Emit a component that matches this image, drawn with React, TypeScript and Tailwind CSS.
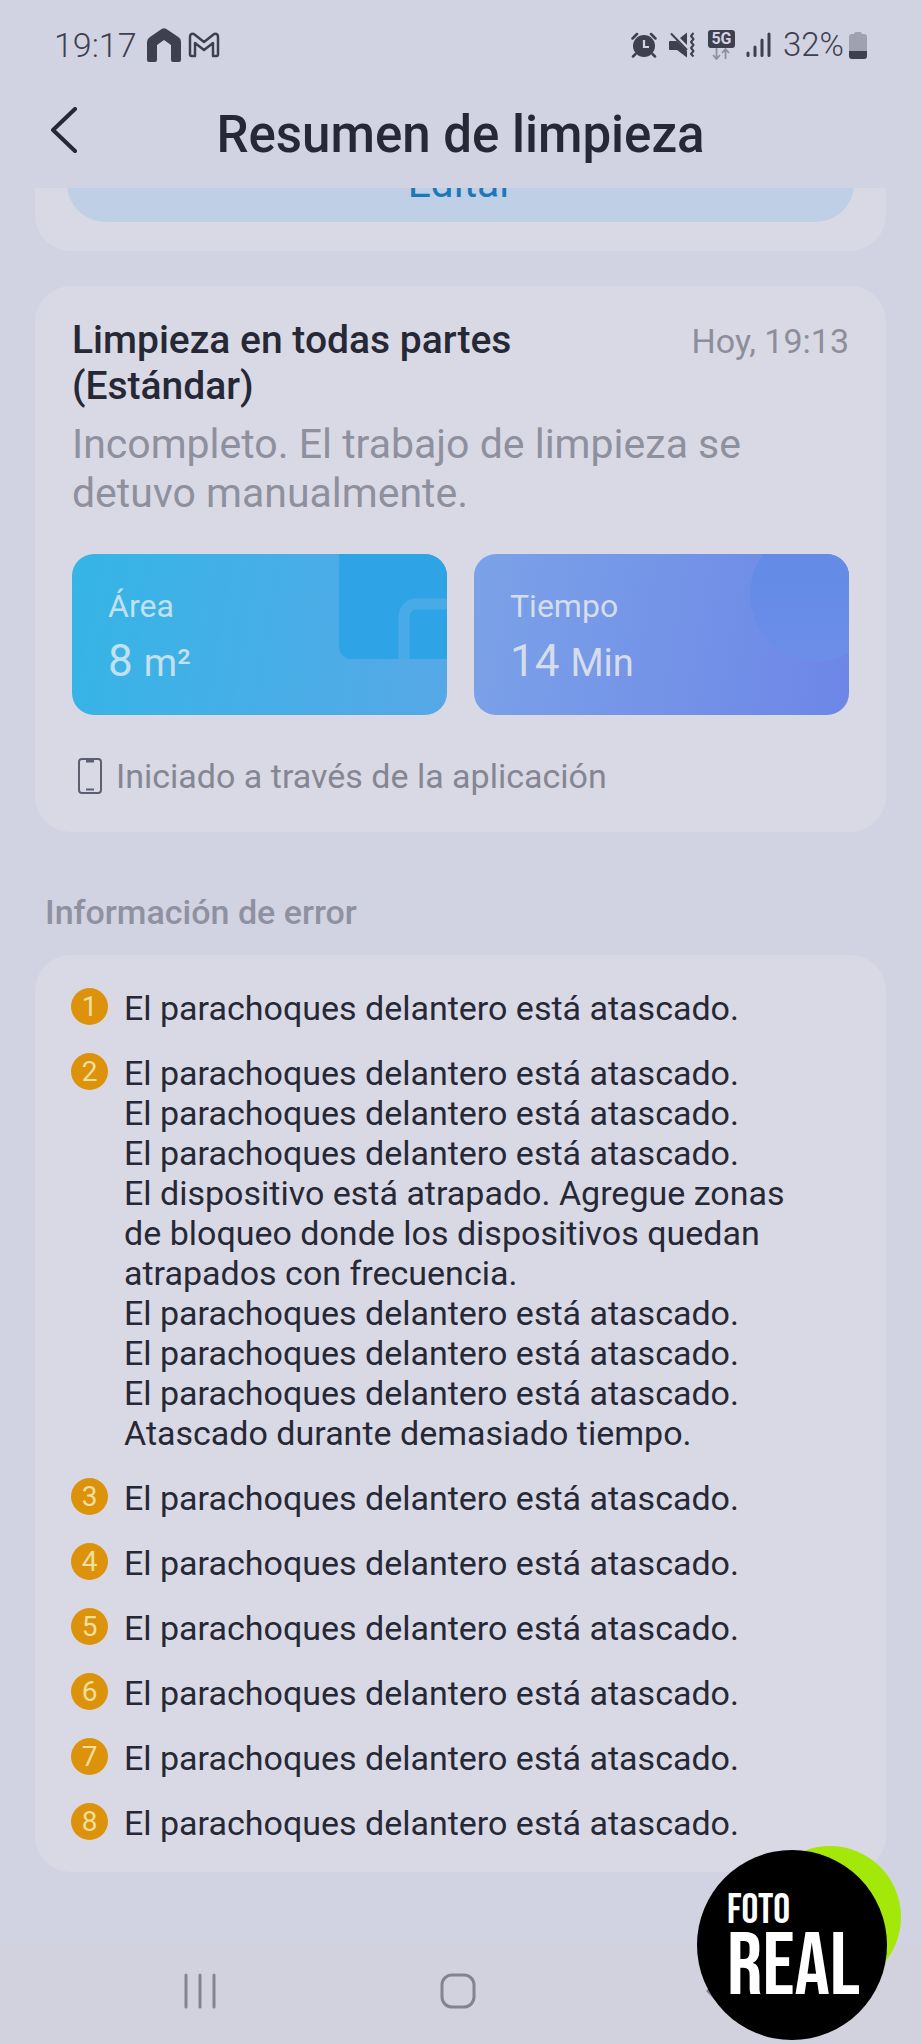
import type { ReactNode } from "react";

const STUCK = "El parachoques delantero está atascado.";

const errors: string[][] = [
  [STUCK],
  [
    STUCK,
    STUCK,
    STUCK,
    "El dispositivo está atrapado. Agregue zonas de bloqueo donde los dispositivos quedan atrapados con frecuencia.",
    STUCK,
    STUCK,
    STUCK,
    "Atascado durante demasiado tiempo.",
  ],
  [STUCK],
  [STUCK],
  [STUCK],
  [STUCK],
  [STUCK],
  [STUCK],
];

function StatusBar() {
  return (
    <div className="flex h-[90px] items-center justify-between pr-[54px] pl-[54px] text-[34px] font-light text-[#3f404f]">
      <div className="flex items-center">
        <span>19:17</span>
        <svg className="ml-[10px] h-[34px] w-[34px]" viewBox="0 0 34 34" fill="currentColor">
          <path d="M15 .8a4 4 0 0 1 4 0l12 8a6 6 0 0 1 3 5V32a2 2 0 0 1-2 2h-6a2 2 0 0 1-2-2V17l-7-5-7 5v15a2 2 0 0 1-2 2H2a2 2 0 0 1-2-2V14a6 6 0 0 1 3-5z" />
        </svg>
        <svg
          className="ml-[7px] h-[26px] w-[32px]"
          viewBox="0 0 32 26"
          fill="none"
          stroke="currentColor"
          strokeWidth="2.5"
          strokeLinejoin="round"
        >
          <path d="M3.500 24H7V11l9 7 9-7v13h3.500a1.500 1.500 0 0 0 1.500-1.500V4.500C30 2 27.500 1 25.500 2.500L16 10 6.500 2.500C4.500 1 2 2 2 4.500v18A1.500 1.500 0 0 0 3.500 24z" />
        </svg>
      </div>
      <div className="flex items-center">
        {/* Alarm */}
        <svg className="h-[26px] w-[26px]" viewBox="0 0 26 26" fill="none">
          <circle cx="13" cy="14" r="11" fill="currentColor" />
          <path
            d="M1.500 6.500 6 2M24.500 6.500 20 2M4.500 22 2 24.500M21.500 22l2.500 2.500"
            stroke="currentColor"
            strokeWidth="2.500"
            strokeLinecap="round"
          />
          <path d="M13 8v7h5" stroke="#d1d3e2" strokeWidth="2.200" />
        </svg>
        {/* Vibrate */}
        <svg className="ml-3 h-[26px] w-[26px]" viewBox="0 0 26 26">
          <path d="M1 9h7l10 10v6.500L8 18H1a1 1 0 0 1-1-1v-7a1 1 0 0 1 1-1zM11 6l7-5.500V13z" fill="currentColor" />
          <path
            d="M2 1.500 18 18M24.500 1l-2.500 3 2.500 3-2.500 3 2.500 3-2.500 3 2.500 3-2.500 3 2.500 2.500"
            fill="none"
            stroke="currentColor"
            strokeWidth="2"
            strokeLinejoin="round"
          />
        </svg>
        <div className="ml-[13px] flex flex-col items-center">
          <span className="w-[27px] rounded-[3px] bg-[#3f404f] text-center text-[16px] leading-[18px] font-bold text-[#d1d3e2]">
            5G
          </span>
          <svg
            className="h-[12px] w-[20px]"
            viewBox="0 0 20 12"
            fill="none"
            stroke="#8f909e"
            strokeWidth="1.800"
          >
            <path d="M5.500 0v11M2 7l3.500 4L9 7M14.500 11V1M11 5l3.500-4L18 5" />
          </svg>
        </div>
        <svg
          className="ml-[10px] h-[26px] w-[26px]"
          viewBox="0 0 26 26"
          stroke="currentColor"
          strokeWidth="3"
          strokeLinecap="round"
        >
          <path d="M3 21v2.500M10 15v8.500M17 8v15.500M24 2v21.500" />
        </svg>
        <span className="ml-3 text-[33px]">32%</span>
        <svg className="ml-[5px] h-[27px] w-[18px]" viewBox="0 0 18 27">
          <path d="M5 2a2 2 0 0 1 2-2h4a2 2 0 0 1 2 2h2a3 3 0 0 1 3 3v15H0V5a3 3 0 0 1 3-3z" fill="#9fa0b0" />
          <path d="M0 19h18v5a3 3 0 0 1-3 3H3a3 3 0 0 1-3-3z" fill="#3f404f" />
        </svg>
      </div>
    </div>
  );
}

function Header() {
  return (
    <header className="grid h-[98px] grid-cols-[80px_1fr_80px] px-6 text-[#262836]">
      <button type="button" aria-label="Volver" className="flex h-20 items-center justify-center">
        <svg
          className="h-[46px] w-[26px]"
          viewBox="0 0 26 46"
          fill="none"
          stroke="currentColor"
          strokeWidth="4"
          strokeLinecap="round"
          strokeLinejoin="round"
        >
          <path d="M24 2 2 23l22 21" />
        </svg>
      </button>
      <h1 className="pt-4 text-center text-[51px] leading-[58px] font-medium">Resumen de limpieza</h1>
    </header>
  );
}

function StatTile({
  label,
  value,
  unit,
  className,
  children,
}: {
  label: string;
  value: string;
  unit: string;
  className: string;
  children: ReactNode;
}) {
  return (
    <div className={`relative overflow-hidden rounded-[22px] px-9 pt-8 pb-7 ${className}`}>
      {children}
      <div className="relative text-[32px] leading-10">{label}</div>
      <div className="relative mt-[9px] text-[44px] leading-[52px]">
        {value} <span className="text-[38px] leading-none">{unit}</span>
      </div>
    </div>
  );
}

function CleaningCard() {
  return (
    <section className="mt-[35px] rounded-[36px] bg-[#d9d9e5] px-[37px] pt-[31px] pb-9">
      <div className="flex items-baseline justify-between gap-8">
        <h2 className="text-[39px] leading-[46px] font-medium text-[#262836]">
          Limpieza en todas partes (Estándar)
        </h2>
        <time className="shrink-0 text-[34px] leading-10 text-[#8d8e9b]">Hoy, 19:13</time>
      </div>
      <p className="mt-[11px] text-[41px] leading-[49px] text-[#8f909e]">
        Incompleto. El trabajo de limpieza se detuvo manualmente.
      </p>
      <div className="mt-9 grid grid-cols-2 gap-[27px]">
        <StatTile
          label="Área"
          value="8"
          unit="m²"
          className="bg-linear-[100deg] from-[#35b5e6] to-[#56a8e6] text-[#c3e0ee]"
        >
          <svg className="absolute top-0 right-0 h-[161px] w-[108px]" viewBox="0 0 108 161">
            <path d="M0 0h108v105H12a12 12 0 0 1-12-12z" fill="#2ea4e7" />
            <path d="M65 105V62a12 12 0 0 1 12-12h40" fill="none" stroke="#48abe8" strokeWidth="11" />
          </svg>
        </StatTile>
        <StatTile
          label="Tiempo"
          value="14"
          unit="Min"
          className="bg-linear-[100deg] from-[#7ba2e8] to-[#6d86e7] text-[#d5dcea]"
        >
          <svg className="absolute top-0 right-0 h-[161px] w-[108px]" viewBox="0 0 108 161">
            <defs>
              <linearGradient id="dial" x1="0" y1="0" x2="0" y2="1">
                <stop offset=".4" stopColor="#648ce7" />
                <stop offset="1" stopColor="#6c8ee8" />
              </linearGradient>
            </defs>
            <circle cx="76" cy="40" r="67" fill="url(#dial)" />
          </svg>
        </StatTile>
      </div>
      <div className="mt-[41px] flex items-center text-[34px] leading-10 text-[#858693]">
        <svg
          className="mx-[6px] h-9 w-6"
          viewBox="0 0 24 36"
          fill="none"
          stroke="#5c5f70"
          strokeWidth="2"
        >
          <rect x="1" y="1" width="22" height="34" rx="3" />
          <path d="M8 3h8" strokeWidth="3" />
          <path d="M8 31.500h8" />
        </svg>
        <span className="ml-[8px]">Iniciado a través de la aplicación</span>
      </div>
    </section>
  );
}

function ErrorList() {
  return (
    <section>
      <h2 className="mt-[60px] ml-[10px] text-[34px] leading-10 font-medium text-[#8f91a0]">
        Información de error
      </h2>
      <ol className="mt-[23px] flex flex-col gap-[25px] rounded-[36px] bg-[#d9d9e5] pt-[33px] pr-[70px] pb-[29px] pl-[36px] text-[34px] leading-10 text-[#262836]">
        {errors.map((lines, i) => (
          <li key={i} className="flex items-start gap-4">
            <span className="flex size-[37px] shrink-0 items-center justify-center rounded-full bg-[#dc930b] text-[28px] leading-none text-[#eedf9c]">
              {i + 1}
            </span>
            <div>
              {lines.map((line, j) => (
                <p key={j}>{line}</p>
              ))}
            </div>
          </li>
        ))}
      </ol>
    </section>
  );
}

function NavBar() {
  return (
    <nav className="grid h-[101px] grid-cols-3 items-center justify-items-center bg-[#d2d2de] pr-[76px] pb-[6px] pl-[71px] text-[#838492]">
      <button type="button" aria-label="Recientes" className="flex w-20 justify-center">
        <svg className="h-9 w-9" viewBox="0 0 36 36" stroke="currentColor" strokeWidth="3" strokeLinecap="round">
          <path d="M4 2v32M18 2v32M32 2v32" />
        </svg>
      </button>
      <button type="button" aria-label="Inicio" className="flex w-20 justify-center">
        <svg className="h-9 w-9" viewBox="0 0 36 36" fill="none" stroke="currentColor" strokeWidth="3">
          <rect x="2" y="2" width="32" height="32" rx="10" />
        </svg>
      </button>
      <button type="button" aria-label="Atrás" className="flex w-20 justify-center">
        <svg
          className="h-9 w-5"
          viewBox="0 0 20 36"
          fill="none"
          stroke="currentColor"
          strokeWidth="3"
          strokeLinecap="round"
        >
          <path d="M18 2 2 18l16 16" />
        </svg>
      </button>
    </nav>
  );
}

function Watermark() {
  return (
    <div className="absolute right-5 bottom-1 h-[194px] w-[204px]">
      <div className="absolute top-0 right-0 size-[142px] rounded-full bg-[#a4e80a]" />
      <div className="absolute bottom-0 left-0 flex size-[190px] flex-col rounded-full bg-black pt-9 pl-[30px] font-['Bebas_Neue','Roboto',sans-serif] text-white">
        <span className="text-[42px] leading-[50px]">FOTO</span>
        <span className="text-[88px] leading-[64px]">REAL</span>
      </div>
    </div>
  );
}

export default function App() {
  return (
    <div className="relative flex min-h-screen flex-col bg-[#d1d3e2] font-['Roboto',sans-serif]">
      <StatusBar />
      <Header />
      <main className="flex-1 px-[35px] pb-[71px]">
        {/* Tail of the previous card, scrolled under the header */}
        <div className="rounded-b-[36px] bg-[#d9d9e5] px-8 pb-[29px]">
          <div className="flex h-[34px] items-end overflow-hidden">
            <button
              type="button"
              className="h-[76px] w-full shrink-0 rounded-full bg-[#bfcfe5] text-[41px] text-[#1c78b8]"
            >
              Editar
            </button>
          </div>
        </div>
        <CleaningCard />
        <ErrorList />
      </main>
      <NavBar />
      <Watermark />
    </div>
  );
}
